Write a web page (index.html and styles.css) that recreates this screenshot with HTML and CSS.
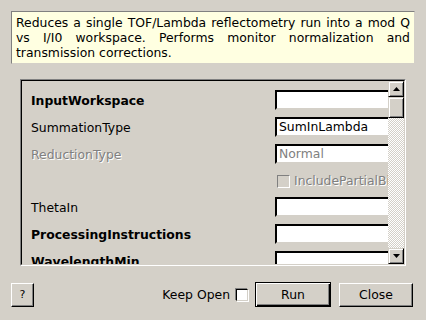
FILE: index.html
```html
<!DOCTYPE html>
<html>
<head>
<meta charset="utf-8">
<link rel="stylesheet" href="styles.css">
</head>
<body>
<div class="dialog">
  <div class="desc">Reduces a single TOF/Lambda reflectometry run into a mod Q vs I/I0 workspace. Performs monitor normalization and transmission corrections.</div>
  <div class="frame">
    <div class="frame-inner">
      <div class="viewport">
        <div class="row"><span class="label bold">InputWorkspace</span><span class="field"></span></div>
        <div class="row"><span class="label">SummationType</span><span class="field">SumInLambda</span></div>
        <div class="row"><span class="label disabled">ReductionType</span><span class="field dim">Normal</span></div>
        <div class="row check-row"><span class="label"></span><span class="check-wrap"><span class="cb cb-disabled"></span><span class="disabled">IncludePartialBins</span></span></div>
        <div class="row"><span class="label">ThetaIn</span><span class="field"></span></div>
        <div class="row"><span class="label bold">ProcessingInstructions</span><span class="field"></span></div>
        <div class="row"><span class="label bold">WavelengthMin</span><span class="field"></span></div>
      </div>
      <div class="scrollbar">
        <div class="sb-btn"><svg width="7" height="4" viewBox="0 0 7 4"><path d="M3.5 0 L7 4 L0 4 Z" fill="#000"/></svg></div>
        <div class="sb-thumb"></div>
        <div class="sb-track"></div>
        <div class="sb-btn"><svg width="7" height="4" viewBox="0 0 7 4"><path d="M0 0 L7 0 L3.5 4 Z" fill="#000"/></svg></div>
      </div>
    </div>
  </div>
  <div class="footer">
    <button class="btn help">?</button>
    <div class="spacer"></div>
    <span class="keep">Keep Open</span>
    <span class="cb cb-white"></span>
    <button class="btn run">Run</button>
    <button class="btn close">Close</button>
  </div>
</div>
</body>
</html>
```

FILE: styles.css
```css
html, body {
  margin: 0;
  padding: 0;
  background: #d4d0c8;
}
body {
  width: 426px;
  height: 320px;
  overflow: hidden;
  font-family: "DejaVu Sans", sans-serif;
  font-size: 12.4px;
  color: #000;
}
.dialog {
  display: flex;
  flex-direction: column;
  padding: 11px 11px 0 11px;
}
.desc {
  background: #ffffe1;
  border: 1px solid;
  border-color: #808080 #d4d0c8 #d4d0c8 #808080;
  padding: 3px 4px 0 4px;
  line-height: 15px;
  text-align: justify;
  box-sizing: border-box;
  height: 53px;
}
.frame {
  margin: 15px 0 0 9px;
  width: 386px;
  height: 187px;
  box-sizing: border-box;
  border: 1px solid;
  border-color: #808080 #fff #fff #808080;
}
.frame-inner {
  height: 100%;
  box-sizing: border-box;
  border: 1px solid;
  border-color: #000 #d4d0c8 #d4d0c8 #000;
  display: flex;
}
.viewport {
  flex: 1;
  overflow: hidden;
  padding: 9px 0 0 9px;
  display: flex;
  flex-direction: column;
}
.row {
  height: 27px;
  flex: none;
  display: flex;
  align-items: flex-start;
}
.label {
  width: 244px;
  flex: none;
  line-height: 20px;
  padding-top: 1px;
}
.bold { font-weight: bold; }
.disabled {
  color: #808080;
  text-shadow: 1px 1px 0 #fff;
}
.field {
  flex: none;
  width: 130px;
  height: 20px;
  box-sizing: border-box;
  background: #fff;
  border-top: 2px solid #000;
  border-left: 2px solid #000;
  border-bottom: 2px solid #d4d0c8;
  border-right: none;
  padding-left: 2px;
  line-height: 16px;
}
.field.dim { color: #808080; }
.check-row { height: 26px; }
.check-wrap {
  display: flex;
  align-items: center;
  gap: 4px;
  margin-left: 2px;
  margin-top: 3px;
  white-space: nowrap;
  line-height: 14px;
}
.cb {
  display: inline-block;
  width: 13px;
  height: 13px;
  box-sizing: border-box;
  flex: none;
}
.cb-disabled {
  border: 1px solid;
  border-color: #808080 #fff #fff #808080;
  background: #d4d0c8;
}
.cb-white {
  border: 1px solid;
  border-color: #000 #d4d0c8 #d4d0c8 #000;
  background: #fff;
  box-shadow: -1px -1px 0 #808080, 1px 1px 0 #fff;
  width: 12px;
  height: 12px;
}
.scrollbar {
  width: 16px;
  flex: none;
  display: flex;
  flex-direction: column;
}
.sb-btn, .sb-thumb {
  height: 16px;
  box-sizing: border-box;
  background: #d4d0c8;
  border: 1px solid;
  border-color: #d4d0c8 #000 #000 #d4d0c8;
  box-shadow: inset 1px 1px 0 #fff, inset -1px -1px 0 #808080;
  display: flex;
  align-items: center;
  justify-content: center;
  flex: none;
}
.sb-thumb { height: 21px; }
.sb-track {
  flex: 1;
  background-color: #fff;
  background-image: repeating-conic-gradient(#d4d0c8 0 25%, #fff 0 50%);
  background-size: 2px 2px;
}
.footer {
  display: flex;
  align-items: center;
  margin-top: 16px;
  margin-right: 2px;
  height: 25px;
}
.spacer { flex: 1; }
.btn {
  font-family: "DejaVu Sans", sans-serif;
  font-size: 12.4px;
  color: #000;
  background: #d4d0c8;
  border: 1px solid;
  border-color: #fff #000 #000 #fff;
  box-shadow: inset -1px -1px 0 #808080;
  padding: 0;
  margin: 0;
  box-sizing: border-box;
}
.help {
  width: 23px;
  height: 24px;
  font-size: 11px;
}
.keep { margin-right: 6px; }
.run {
  margin-left: 7px;
  width: 76px;
  height: 25px;
  border: 1px solid #000;
  box-shadow: inset 1px 1px 0 #fff, inset -1px -1px 0 #000, inset -2px -2px 0 #808080;
}
.close {
  margin-left: 8px;
  width: 74px;
  height: 24px;
}
```
